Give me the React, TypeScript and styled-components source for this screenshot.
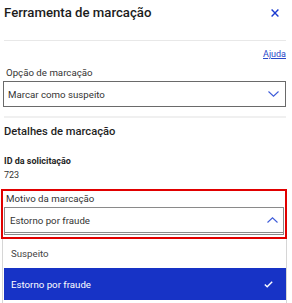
import React from "react";
import styled, { createGlobalStyle } from "styled-components";

const Global = createGlobalStyle`
  html, body { margin: 0; padding: 0; background: #ffffff; }
  body { font-family: Roboto, "Liberation Sans", Arial, sans-serif; color: #1f1f1f; }
  * { box-sizing: border-box; }
`;

const Panel = styled.div`
  width: 292px;
  height: 303px;
  overflow: hidden;
  padding: 0 6px 0 3px;
  display: flex;
  flex-direction: column;
`;

const Header = styled.div`
  display: flex;
  justify-content: space-between;
  align-items: center;
  margin-left: 1px;
  padding: 4px 0 18px;
  border-bottom: 1px solid #e8e8e8;
`;

const Title = styled.h1`
  margin: 0;
  font-size: 13.2px;
  line-height: 18px;
  font-weight: 500;
  color: #1c1c1c;
`;

const CloseButton = styled.button`
  border: 0;
  background: none;
  padding: 0;
  width: 8px;
  height: 8px;
  margin-right: 7px;
  display: flex;
  align-items: center;
  justify-content: center;
  color: #1a3bd0;
  cursor: pointer;
`;

const HelpRow = styled.div`
  display: flex;
  justify-content: flex-end;
  padding-top: 7px;
`;

const HelpLink = styled.a`
  font-size: 9px;
  line-height: 12px;
  color: #2a47c8;
  text-decoration: underline;
`;

const Label = styled.div`
  font-size: 9.7px;
  line-height: 14px;
  color: #333333;
  padding-left: 3px;
  margin-top: 6px;
`;

const Select = styled.div`
  margin-top: 1px;
  height: 26px;
  display: flex;
  align-items: center;
  justify-content: space-between;
  padding: 0 6px 0 4px;
  border: 1px solid #6a6a6a;
  font-size: 9.7px;
  color: #333333;
  background: #ffffff;
`;

const Chevron = ({ up }: { up?: boolean }) => (
  <svg width="11" height="6" viewBox="0 0 11 6" fill="none">
    <path
      d={up ? "M0.5 5.5L5.5 0.8L10.5 5.5" : "M0.5 0.5L5.5 5.2L10.5 0.5"}
      stroke="#3d5bd9"
      strokeWidth="1.1"
    />
  </svg>
);

const Divider = styled.div`
  height: 2px;
  background: #f0f0f0;
  margin: 9px 0 0 1px;
`;

const SectionTitle = styled.h2`
  margin: 6px 0 0 1px;
  font-size: 11.2px;
  line-height: 16px;
  font-weight: 500;
  color: #1f1f1f;
`;

const InfoLabel = styled.div`
  margin: 15px 0 0 1px;
  font-size: 9px;
  line-height: 12px;
  font-weight: 700;
  color: #1f1f1f;
`;

const InfoValue = styled.div`
  margin: 2px 0 0 1px;
  font-size: 9px;
  line-height: 12px;
  color: #333333;
`;

const Highlight = styled.div`
  margin: 8px -1px 0 -2px;
  border: 2px solid #e10000;
  padding: 0 1px 2px 1px;
  display: flex;
  flex-direction: column;
`;

const FieldLabel = styled(Label)`
  margin-top: 0;
  line-height: 15px;
  padding-left: 2px;
`;

const OpenSelect = styled(Select)`
  height: 28px;
  padding: 0 5px 0 5px;
  border-width: 1px 1px 3px 1px;
  border-color: #8a8a8a;
  border-style: solid solid double solid;
`;

const Menu = styled.ul`
  list-style: none;
  margin: 0 -1px 0 -1px;
  padding: 0 0 0 1px;
  border-left: 1px solid #d6d6d6;
  border-right: 1px solid #d6d6d6;
  flex: 1;
`;

const Option = styled.li<{ $selected?: boolean }>`
  height: ${(p) => (p.$selected ? "32px" : "29px")};
  display: flex;
  align-items: center;
  justify-content: space-between;
  padding: 0 13px 0 7px;
  font-size: 9.7px;
  color: ${(p) => (p.$selected ? "#ffffff" : "#444444")};
  background: ${(p) => (p.$selected ? "#1733c6" : "#ffffff")};
`;

export default function App() {
  return (
    <>
      <Global />
      <Panel>
        <Header>
          <Title>Ferramenta de marcação</Title>
          <CloseButton aria-label="Fechar">
            <svg width="8" height="8" viewBox="0 0 8 8">
              <path d="M0.6 0.6L7.4 7.4M7.4 0.6L0.6 7.4" stroke="currentColor" strokeWidth="1.4" />
            </svg>
          </CloseButton>
        </Header>
        <HelpRow>
          <HelpLink href="#">Ajuda</HelpLink>
        </HelpRow>
        <Label>Opção de marcação</Label>
        <Select>
          <span>Marcar como suspeito</span>
          <Chevron />
        </Select>
        <Divider />
        <SectionTitle>Detalhes de marcação</SectionTitle>
        <InfoLabel>ID da solicitação</InfoLabel>
        <InfoValue>723</InfoValue>
        <Highlight>
          <FieldLabel>Motivo da marcação</FieldLabel>
          <OpenSelect>
            <span>Estorno por fraude</span>
            <Chevron up />
          </OpenSelect>
        </Highlight>
        <Menu>
          <Option>Suspeito</Option>
          <Option $selected>
            <span>Estorno por fraude</span>
            <svg width="9" height="7" viewBox="0 0 9 7">
              <path d="M0.8 3.6L3.2 5.8L8.2 0.8" stroke="#ffffff" strokeWidth="1.4" fill="none" />
            </svg>
          </Option>
        </Menu>
      </Panel>
    </>
  );
}
